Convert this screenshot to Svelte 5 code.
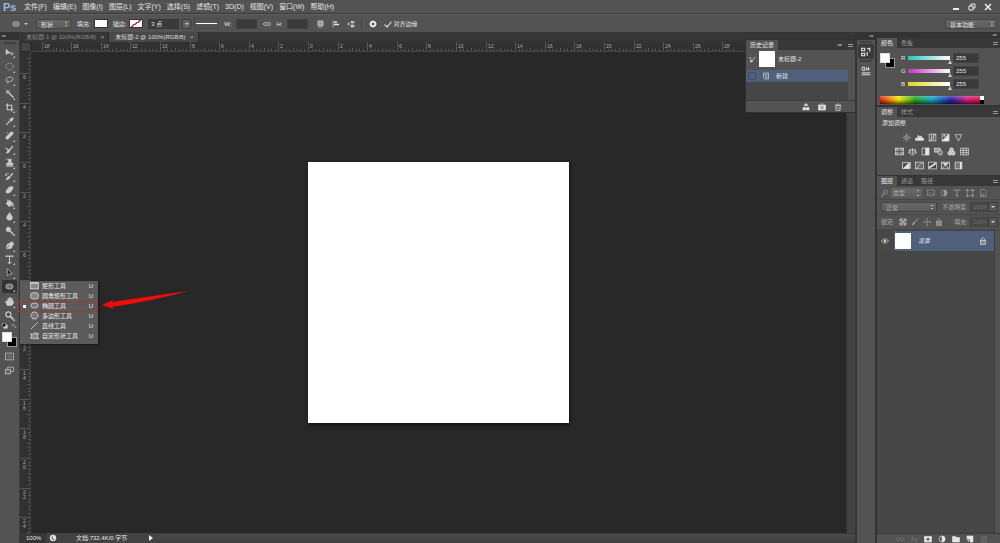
<script>
  const menus = ['文件(F)', '编辑(E)', '图像(I)', '图层(L)', '文字(Y)', '选择(S)', '滤镜(T)', '3D(D)', '视图(V)', '窗口(W)', '帮助(H)'];

  // 16x16 stroke icons
  const icons = {
    move: '<path d="M2 2v10l3-3h4z" fill="currentColor"/><path d="M12 6v8M8 10h8"/>',
    marquee: '<ellipse cx="8" cy="8" rx="6.500" ry="6" stroke-dasharray="3 2"/>',
    lasso: '<ellipse cx="8" cy="6" rx="6.500" ry="4" transform="rotate(-15 8 6)"/><path d="M3 8c-1 3 3 2 2 6" />',
    wand: '<path d="M7 7l8 8" stroke-width="2.400"/><path d="M5 1v8M1 5h8M2 2l6 6M8 2l-6 6"/>',
    crop: '<path d="M4 1v11h11M1 4h11v11" stroke-width="2"/>',
    dropper: '<path d="M2 14l7-7" stroke-width="2"/><path d="M8 5l3 3 4-5-2-2z" fill="currentColor"/>',
    heal: '<path d="M4 12l8-8" stroke-width="6" stroke-linecap="round"/><path d="M2 5c1-3 3-3 5-3" stroke-dasharray="2 1"/>',
    brush: '<path d="M8 9l6-7" stroke-width="2.400"/><path d="M1 5l5 3c4 1 3 5-1 6H2c3-2 2-4 3-5z" fill="currentColor"/>',
    stamp: '<path d="M6 2h5v3l-1 4h4v4H3V9h4L6 5z" fill="currentColor"/><path d="M2 15h13M1 2h4"/>',
    history: '<path d="M8 9l6-7" stroke-width="2.400"/><path d="M7 8c3 2 1 5-5 6 2-3 1-5 5-6z" fill="currentColor"/><path d="M1 6c1-4 4-4 6-3M1 3v3h3"/>',
    eraser: '<path d="M2 10l6-7h6v4l-6 7H2z" fill="currentColor"/>',
    bucket: '<path d="M2 8l6-6 6 6-6 6z" fill="currentColor"/><path d="M5 1v6M14 8v6" stroke-width="2"/>',
    blur: '<path d="M8 1c3 5 5 6 5 9 0 6-10 6-10 0 0-3 2-4 5-9z" fill="currentColor"/>',
    dodge: '<circle cx="6" cy="6" r="4" fill="currentColor"/><path d="M9 9l6 6" stroke-width="2.400"/>',
    pen: '<path d="M2 14l2-8 6-3 4 4-3 6zM10 3l2-2 4 4-2 2" fill="currentColor"/><path d="M2 14l6-6" stroke="#444"/>',
    type: '<path d="M2 4V2h12v2M8 2v12M5 14h6" stroke-width="1.800"/>',
    select: '<path d="M4 1v13l3.500-3.500H13z" fill="#222"/>',
    ellipse: '<ellipse cx="8" cy="8" rx="6.500" ry="4.500" fill="#777"/>',
    hand: '<path d="M4 15L1 8l2-1 2 2V3h2v4l1-6h2v6l2-5 1 1v5l2-1v4l-3 4z" fill="currentColor"/>',
    zoom: '<circle cx="6" cy="6" r="4.500" stroke-width="2"/><path d="M9 9l6 6" stroke-width="3"/>',
    mask: '<rect x="1" y="2" width="14" height="12"/><circle cx="8" cy="8" r="3" stroke-dasharray="2 1"/>',
    screen: '<rect x="5" y="2" width="10" height="8"/><rect x="1" y="6" width="9" height="8" fill="#666"/>',
    rect: '<rect x="1" y="3" width="14" height="11" fill="#888"/><path d="M1 4h14"/>',
    rounded: '<rect x="1" y="3" width="14" height="11" rx="4" fill="#888"/>',
    polygon: '<path d="M5 2h6l4 6-4 6H5L1 8z" fill="#777"/>',
    line: '<path d="M2 14L14 2"/>',
    custom: '<path d="M1 13l2-4-2-4 5 1 3-4 1 3 5-1-2 5 2 5-5-1-2 2-2-2z" fill="#888"/>',
    link: '<path d="M7 5H4a3 3 0 000 6h3M9 5h3a3 3 0 010 6H9M5 8h6"/>',
    combine: '<rect x="2" y="2" width="10" height="9" fill="#999"/><path d="M2 14h9"/>',
    align: '<path d="M2 1v14"/><path d="M4 4h6M4 9h10" stroke-width="3"/>',
    arrange: '<path d="M1 8h5M3 5v6"/><path d="M8 3h6v3H8zM8 10h6v4H8z" fill="#aaa"/>',
    gear: '<circle cx="8" cy="8" r="4.500" stroke-width="4"/><path d="M8 0v4M8 12v4M0 8h4M12 8h4" />',
    snapshot: '<rect x="1" y="4" width="14" height="10" fill="currentColor"/><circle cx="8" cy="9" r="2.500" stroke="#444"/><path d="M5 2h6"/>',
    trash: '<path d="M3 5h10l-1 10H4zM2 4h12M6 2h4M6 7v6M10 7v6"/>',
    newdoc: '<path d="M8 1l4 4H4zM2 9h5v5H2zM9 9h5v5H9z" fill="currentColor"/>',
    page: '<path d="M3 2h10v12H6l-3-3zM5 5h6M5 8h6M7 11h4"/>',
    sun: '<circle cx="8" cy="8" r="3"/><path d="M8 1v2M8 13v2M1 8h2M13 8h2M3 3l1 1M12 12l1 1M13 3l-1 1M3 13l1-1"/>',
    levels: '<path d="M1 13V9l3 1 2-6 3 4 2-3 2 5 2-1v4z" fill="currentColor"/>',
    curves: '<rect x="2" y="2" width="12" height="12"/><path d="M2 14C9 13 7 4 14 2M6 2v12M10 2v12"/>',
    exposure: '<rect x="2" y="2" width="12" height="12"/><path d="M2 14L14 2v12z" fill="currentColor"/><path d="M4 5h4M6 3v4"/>',
    vibrance: '<path d="M2 3h12L8 14z"/>',
    hue: '<rect x="1" y="2" width="14" height="12" fill="#999"/><path d="M1 8h14M8 2v12" stroke="#444"/>',
    balance: '<path d="M8 2v11M2 5h12M3 5l-2 6h4zM13 5l-2 6h4zM5 14h6"/>',
    bw: '<rect x="2" y="2" width="12" height="12"/><path d="M8 2h6v12H8z" fill="currentColor"/>',
    photo: '<rect x="1" y="2" width="10" height="7" fill="#999"/><circle cx="11" cy="10" r="4" fill="#777"/>',
    mixer: '<circle cx="8" cy="5" r="3.500" fill="#bbb"/><circle cx="5" cy="11" r="3.500" fill="#bbb"/><circle cx="11" cy="11" r="3.500" fill="#bbb"/>',
    grid: '<path d="M1 2h14v12H1zM1 6h14M1 10h14M6 2v12M11 2v12"/>',
    invert: '<rect x="1" y="3" width="14" height="10"/><path d="M3 13L13 3v10z" fill="currentColor"/>',
    poster: '<rect x="1" y="2" width="14" height="12" fill="#666"/><path d="M2 13c6-1 3-7 12-10"/>',
    threshold: '<rect x="1" y="2" width="14" height="12" fill="#444"/><path d="M2 12L14 4" stroke-width="3"/>',
    selective: '<rect x="1" y="2" width="14" height="12"/><path d="M1 2l14 12M15 2L1 14M4 4h8l-4 4z" fill="currentColor"/>',
    gradient: '<rect x="2" y="2" width="12" height="12" fill="#777"/><path d="M12 2v12" stroke-width="3"/>',
    search: '<circle cx="9" cy="6" r="4"/><path d="M6 9l-5 6" stroke-width="2"/>',
    image: '<rect x="1" y="2" width="14" height="11"/><path d="M2 12l4-5 3 3 2-2 3 4"/>',
    half: '<circle cx="8" cy="8" r="6"/><path d="M8 2a6 6 0 010 12z" fill="currentColor"/>',
    shape: '<rect x="3" y="3" width="10" height="10"/><path d="M1 1h3v3H1zM12 1h3v3h-3zM1 12h3v3H1zM12 12h3v3h-3z" fill="currentColor"/>',
    smart: '<path d="M3 1h9l2 3v11H3zM5 10h5v4H5z"/>',
    lock: '<rect x="3" y="7" width="10" height="8" fill="#888"/><path d="M5 7V4c0-3 6-3 6 0v3"/>',
    pixels: '<rect x="2" y="2" width="12" height="12"/><path d="M2 2h4v4H2zM10 2h4v4h-4zM6 6h4v4H6zM2 10h4v4H2zM10 10h4v4h-4z" fill="currentColor"/>',
    paint: '<path d="M6 10l8-9" stroke-width="1.800"/><path d="M5 9l2 2-5 3z" fill="currentColor"/>',
    pos: '<path d="M8 1v14M1 8h14M6 3l2-2 2 2M6 13l2 2 2-2M3 6L1 8l2 2M13 6l2 2-2 2"/>',
    eye: '<path d="M1 8c4-6 10-6 14 0-4 6-10 6-14 0z"/><circle cx="8" cy="8" r="2" fill="currentColor"/>',
    fx: '<path d="M7 2C4 2 5 14 2 14M3 7h5M9 7l5 7M14 7l-5 7"/>',
    addmask: '<rect x="1" y="3" width="14" height="11" fill="currentColor"/><circle cx="8" cy="8.500" r="3" fill="#333"/>',
    folder: '<path d="M1 3h6l1 2h7v9H1z" fill="currentColor"/>',
    newlayer: '<path d="M2 2h12v12H7l-5-5z" fill="currentColor"/><path d="M2 9h5v5" stroke="#444"/>',
    historyPanel: '<path d="M1 2h5v4H1zM1 10h5v4H1zM10 14V8M10 3l4-1v5" stroke-width="1.800"/>',
    props: '<path d="M2 2h4v5H2zM9 2v5M9 5h5M12 2v5M1 11h14M1 14h14" stroke-width="1.500"/>',
    source: '<path d="M2 2v4h4M14 2l-8 11" stroke-width="1.500"/><path d="M3 14l1-5 4 3z" fill="currentColor"/>',
    swap: '<path d="M3 6c5-4 8 0 9 6M6 2L2 6l4 3M9 10l3 3 3-3"/>',
    defaults: '<rect x="5" y="5" width="9" height="9" fill="#ddd"/><rect x="1" y="1" width="9" height="9" fill="#111"/>',
    globe: '<circle cx="8" cy="8" r="6" fill="currentColor"/><path d="M8 5a3 3 0 103 5" stroke="#555" stroke-width="2"/>'
  };

  const toolGroups = [
    { size: 'one', tools: ['move'] },
    { size: 'five', tools: ['marquee', 'lasso', 'wand', 'crop', 'dropper'] },
    { size: 'eight', tools: ['heal', 'brush', 'stamp', 'history', 'eraser', 'bucket', 'blur', 'dodge'] },
    { size: 'four', tools: ['pen', 'type', 'select', 'ellipse'] },
    { size: 'two', tools: ['hand', 'zoom'] }
  ];

  const shapes = [
    ['rect', '矩形工具'],
    ['rounded', '圆角矩形工具'],
    ['ellipse', '椭圆工具'],
    ['polygon', '多边形工具'],
    ['line', '直线工具'],
    ['custom', '自定形状工具']
  ];

  const adjustments = [
    ['sun', 'levels', 'curves', 'exposure', 'vibrance'],
    ['hue', 'balance', 'bw', 'photo', 'mixer', 'grid'],
    ['invert', 'poster', 'threshold', 'selective', 'gradient']
  ];

  const docSize = 261;
  const unit = 14.8; // one ruler unit on screen
  const historyWidth = 110;
  let areaWidth = $state(816);
  let areaHeight = $state(481);

  function ticks(length) {
    const origin = (length - docSize) / 2;
    const out = [];
    for (let n = Math.ceil(-origin / unit); origin + n * unit < length; n++) {
      out.push({ n, at: Math.round(origin + n * unit) });
    }
    return out;
  }
  // nothing to draw under the history panel
  let xTicks = $derived(ticks(areaWidth).filter((t) => t.at < areaWidth - historyWidth));
  let yTicks = $derived(ticks(areaHeight));
</script>

{#snippet icon(name)}
  <svg class="icon" viewBox="0 0 16 16" aria-hidden="true">{@html icons[name]}</svg>
{/snippet}

<div class="app">
  <header class="menubar">
    <span class="logo">Ps</span>
    <nav>
      {#each menus as item}<button>{item}</button>{/each}
    </nav>
    <div class="window-buttons">
      <button aria-label="最小化"><svg viewBox="0 0 8 8"><path d="M1 6h6" stroke-width="2" /></svg></button>
      <button aria-label="还原"><svg viewBox="0 0 8 8"><path d="M3 3V1h4v4H5M1 3h4v4H1z" /></svg></button>
      <button aria-label="关闭"><svg viewBox="0 0 8 8"><path d="M1 1l6 6M7 1L1 7" stroke-width="1.500" /></svg></button>
    </div>
  </header>

  <div class="options">
    <button class="preset" aria-label="工具预设">{@render icon('ellipse')}<i class="down"></i></button>
    <select class="mode" aria-label="模式"><option>形状</option></select>
    <span>填充:</span>
    <button class="swatch" aria-label="填充"></button>
    <span>描边:</span>
    <button class="swatch none" aria-label="描边"></button>
    <input class="stroke-width" aria-label="描边宽度" value="3 点" />
    <button class="drop" aria-label="宽度列表"><i class="down"></i></button>
    <button class="dash" aria-label="描边类型"><i></i></button>
    <label>W:<input class="dim" /></label>
    <span class="linked">{@render icon('link')}</span>
    <label>H:<input class="dim" /></label>
    <div class="path-ops">
      <button aria-label="路径操作">{@render icon('combine')}</button>
      <button aria-label="对齐">{@render icon('align')}</button>
      <button aria-label="排列">{@render icon('arrange')}</button>
    </div>
    <button class="gear" aria-label="设置">{@render icon('gear')}</button>
    <label class="edges"><input type="checkbox" checked />对齐边缘</label>
    <select class="workspace" aria-label="工作区"><option>基本功能</option></select>
  </div>

  <main>
    <aside class="toolbar">
      <div class="strip">▸▸</div>
      <div class="grip"></div>
      {#each toolGroups as group}
        <div class="group {group.size}">
          {#each group.tools as tool}
            <div class="tool" class:active={tool === 'ellipse'}>
              <button aria-label={tool}>{@render icon(tool)}</button>
              {#if tool === 'ellipse'}
                <div class="flyout">
                  {#each shapes as [name, label]}
                    <button class:current={name === 'ellipse'}>
                      {@render icon(name)}<span>{label}</span><kbd>U</kbd>
                    </button>
                  {/each}
                  <svg class="pointer" viewBox="0 0 86 18" aria-hidden="true">
                    <path d="M0 14L11 9L10 11Q50 5 86 0Q55 9 10 16L12 18Z" />
                  </svg>
                </div>
              {/if}
            </div>
          {/each}
        </div>
      {/each}
      <div class="mini">{@render icon('defaults')}{@render icon('swap')}</div>
      <div class="colors"><i class="back"></i><i class="front"></i></div>
      <button class="wide" aria-label="快速蒙版">{@render icon('mask')}</button>
      <button class="wide" aria-label="屏幕模式">{@render icon('screen')}</button>
    </aside>

    <section class="workarea">
      <div class="doc-tabs">
        <button>未标题-1 @ 100%(RGB/8) <b>×</b></button>
        <button class="active">未标题-2 @ 100%(RGB/8) <b>×</b></button>
      </div>
      <div class="view">
        <div class="corner"></div>
        <div class="ruler-x">
          <svg width="100%" height="100%">
            {#each xTicks as t}
              <path d="M{t.at + 0.5} {t.n % 2 ? 6 : 0}V10M{t.at + 4.5} 7v3M{t.at + 7.5} 7v3M{t.at + 11.5} 7v3" />
              {#if t.n % 2 === 0}<text x={t.at + 2} y="6">{Math.abs(t.n)}</text>{/if}
            {/each}
          </svg>
        </div>
        <div class="ruler-y">
          <svg width="100%" height="100%">
            {#each yTicks as t}
              <path d="M{t.n % 2 ? 7 : 0} {t.at + 0.5}H11M8 {t.at + 4.5}h3M8 {t.at + 7.5}h3M8 {t.at + 11.5}h3" />
              {#if t.n % 2 === 0}
                {#each String(Math.abs(t.n)) as digit, i}
                  <text x="3" y={t.at + 6 + i * 5}>{digit}</text>
                {/each}
              {/if}
            {/each}
          </svg>
        </div>
        <div class="canvas" bind:clientWidth={areaWidth} bind:clientHeight={areaHeight}>
          <div class="document"></div>
        </div>
        <div class="scroll-y"></div>
      </div>
      <footer class="status">
        <span class="percent">100%</span>
        <span class="globe">{@render icon('globe')}</span>
        <span class="size">文档:732.4K/0 字节</span>
        <button aria-label="状态信息"><i class="right"></i></button>
        <div class="scroll-x"></div>
      </footer>

      <div class="history">
        <div class="tabs"><button class="active">历史记录</button><span>▸▸</span><i class="panel-menu"></i></div>
        <div class="history-list">
          <div class="snap">{@render icon('source')}<i class="thumb"></i>未标题-2</div>
          <div class="state"><i class="box"></i>{@render icon('page')}<span>新建</span></div>
        </div>
        <div class="history-foot">
          <button aria-label="从当前状态创建新文档">{@render icon('newdoc')}</button>
          <button aria-label="创建新快照">{@render icon('snapshot')}</button>
          <button aria-label="删除">{@render icon('trash')}</button>
        </div>
      </div>
    </section>

    <aside class="dock">
      <div class="strip">◂◂</div>
      <div class="grip"></div>
      <button class="active" aria-label="历史记录">{@render icon('historyPanel')}</button>
      <div class="grip"></div>
      <button aria-label="属性">{@render icon('props')}</button>
    </aside>

    <aside class="panels">
      <div class="strip">▸▸</div>
      <section class="color">
        <div class="tabs"><button class="active">颜色</button><button>色板</button><i class="panel-menu"></i></div>
        <div class="color-body">
          <div class="colors"><i class="back"></i><i class="front"></i></div>
          <div class="channels">
            {#each ['R', 'G', 'B'] as ch}
              <label for="ch-{ch}">{ch}</label>
              <div class="track {ch}"></div>
              <input id="ch-{ch}" value="255" />
            {/each}
          </div>
        </div>
        <div class="spectrum"><i></i></div>
      </section>

      <section class="adjust">
        <div class="tabs"><button class="active">调整</button><button>样式</button><i class="panel-menu"></i></div>
        <p>添加调整</p>
        {#each adjustments as row}
          <div class="adjust-row">
            {#each row as name}<button aria-label={name}>{@render icon(name)}</button>{/each}
          </div>
        {/each}
      </section>

      <section class="layers">
        <div class="tabs"><button class="active">图层</button><button>通道</button><button>路径</button><i class="panel-menu"></i></div>
        <div class="row filter">
          <span class="kind">{@render icon('search')}<select aria-label="类型"><option>类型</option></select></span>
          {#each ['image', 'half', 'type', 'shape', 'smart'] as name}
            <button aria-label={name}>{@render icon(name)}</button>
          {/each}
        </div>
        <div class="row blend">
          <select aria-label="混合模式"><option>正常</option></select>
          <label for="opacity">不透明度:</label>
          <input id="opacity" value="100%" disabled />
          <button class="drop" aria-label="不透明度"><i class="down"></i></button>
        </div>
        <div class="row locks">
          <span>锁定:</span>
          {#each ['pixels', 'paint', 'pos', 'lock'] as name}
            <button aria-label={name}>{@render icon(name)}</button>
          {/each}
          <label for="fill">填充:</label>
          <input id="fill" value="100%" disabled />
          <button class="drop" aria-label="填充"><i class="down"></i></button>
        </div>
        <div class="layer-list">
          <div class="layer">
            <button class="eye" aria-label="可见性">{@render icon('eye')}</button>
            <div class="layer-main"><i class="thumb"></i><em>背景</em>{@render icon('lock')}</div>
          </div>
        </div>
        <div class="layer-foot">
          {#each ['link', 'fx', 'addmask', 'half', 'folder', 'newlayer', 'trash'] as name}
            <button class:off={name === 'link' || name === 'fx' || name === 'trash'} aria-label={name}>{@render icon(name)}</button>
          {/each}
        </div>
      </section>
    </aside>
  </main>
</div>

<style>
  :global(body) {
    background: #282828;
    overflow: hidden;
  }
  .app {
    display: flex;
    flex-direction: column;
    height: 100vh;
    color: #e6e6e6;
    font: 6px/10px 'Liberation Sans', 'Noto Sans CJK SC', sans-serif;
    background: #535353;
  }
  .app * { box-sizing: border-box; }
  button, input, select {
    appearance: none;
    margin: 0;
    padding: 0;
    border: 0;
    border-radius: 0;
    background: none;
    color: inherit;
    font: inherit;
    min-width: 0;
  }
  i { display: block; }
  .icon {
    display: block;
    width: 8px;
    height: 8px;
    fill: none;
    stroke: currentColor;
    stroke-width: 1.2;
    flex: none;
  }
  .down {
    border: 2px solid transparent;
    border-top: 2px solid #ccc;
    border-bottom: 0;
  }
  .right {
    border: 3px solid transparent;
    border-left: 4px solid #eee;
    border-right: 0;
  }

  .menubar {
    display: flex;
    align-items: center;
    height: 14px;
    border-bottom: 1px solid #3c3c3c;
    flex: none;
  }
  .logo {
    width: 24px;
    padding-left: 3px;
    color: #8fbbe4;
    font-size: 11px;
    font-weight: bold;
  }
  nav { display: flex; gap: 6px; font-size: 7px; }
  .window-buttons {
    display: flex;
    gap: 8px;
    margin-left: auto;
    padding-right: 8px;
  }
  .window-buttons svg {
    display: block;
    width: 8px;
    height: 8px;
    fill: none;
    stroke: #eee;
  }

  .options {
    display: flex;
    align-items: center;
    gap: 3px;
    height: 18px;
    padding: 0 3px 0 12px;
    border-top: 1px solid #606060;
    flex: none;
  }
  .preset { display: flex; align-items: center; gap: 4px; width: 21px; }
  select {
    height: 10px;
    padding: 0 4px;
    border: 1px solid #454545;
  }
  .mode { width: 35px; margin-right: 3px; }
  .swatch {
    width: 14px;
    height: 9px;
    background: #fff;
    border: 1px solid #333;
    margin-right: 2px;
  }
  .swatch.none { background: linear-gradient(145deg, #fff 45%, #b33 45%, #b33 55%, #fff 55%); }
  .stroke-width { width: 31px; height: 10px; padding-left: 3px; background: #3a3a3a; }
  .drop {
    display: grid;
    place-items: center;
    width: 9px;
    height: 10px;
    background: #626262;
    border: 1px solid #3d3d3d;
  }
  .dash { width: 25px; padding: 4px 1px; border: 1px solid #494949; margin-right: 2px; }
  .dash i { height: 1px; background: #fff; }
  label { display: flex; align-items: center; gap: 4px; }
  .dim { width: 21px; height: 10px; background: #3a3a3a; border: 1px solid #424242; }
  .linked { padding: 0 3px; }
  .path-ops {
    display: flex;
    gap: 7px;
    padding: 0 6px;
    border-right: 1px solid #444;
  }
  .gear { padding: 0 4px; }
  .edges input { width: 6px; height: 6px; position: relative; }
  .edges input::after {
    content: '';
    position: absolute;
    left: 2px;
    top: -1px;
    width: 3px;
    height: 6px;
    border: solid #eee;
    border-width: 0 1px 1px 0;
    transform: rotate(40deg);
  }
  .workspace { width: 52px; margin-left: auto; }
  .mode, .workspace, .kind select, .blend select {
    background-image: linear-gradient(#bbb, #bbb), linear-gradient(#bbb, #bbb), linear-gradient(#686868, #5c5c5c);
    background-size: 2px 1px, 2px 1px, auto;
    background-position: right 3px top 2px, right 3px bottom 2px, 0 0;
    background-repeat: no-repeat;
  }

  main { display: flex; flex: 1; min-height: 0; }
  .strip {
    height: 8px;
    padding-left: 2px;
    background: #333;
    color: #bbb;
    font-size: 4px;
    line-height: 8px;
    flex: none;
  }
  .grip {
    align-self: center;
    width: 12px;
    height: 2px;
    margin: 1px 0;
    background: #404040;
    flex: none;
  }

  .toolbar {
    position: relative;
    z-index: 2;
    display: flex;
    flex-direction: column;
    gap: 1px;
    width: 20px;
    flex: none;
    border-right: 1px solid #3b3b3b;
    color: #ccc;
  }
  .toolbar .icon { width: 9px; height: 9px; }
  .group { display: grid; grid-auto-rows: 1fr; flex: none; }
  .one { height: 13px; }
  .two { height: 27px; margin-top: 1px; }
  .four { height: 54px; margin-top: 1px; }
  .five { height: 68px; }
  .eight { height: 108px; }
  .tool { position: relative; display: grid; }
  .tool > button { display: grid; place-items: center; }
  .tool::after {
    content: '';
    position: absolute;
    right: 4px;
    bottom: 1px;
    border: 1px solid;
    border-color: transparent #ccc #ccc transparent;
  }
  .tool.active > button {
    margin: 0 2px;
    background: #333;
    border-radius: 2px;
  }
  .flyout {
    position: absolute;
    top: 1px;
    left: 20px;
    width: 78px;
    padding-bottom: 3px;
    background: #5b5b5b;
    box-shadow: 1px 1px 2px #181818;
    color: #eee;
  }
  .flyout button {
    position: relative;
    display: flex;
    align-items: center;
    gap: 3px;
    width: 100%;
    height: 10px;
    padding: 0 5px 0 10px;
    text-align: left;
  }
  .flyout kbd { margin-left: auto; font: inherit; }
  .flyout .current::before {
    content: '';
    position: absolute;
    inset: 0 0 -1px -3px;
    border: 1px solid #9a3b36;
  }
  .flyout .current::after {
    content: '';
    position: absolute;
    left: 3px;
    top: 4px;
    width: 3px;
    height: 3px;
    background: #fff;
  }
  .pointer {
    position: absolute;
    left: 82px;
    top: 10px;
    width: 86px;
    height: 18px;
    fill: #f00c0c;
  }
  .toolbar .mini { display: flex; gap: 3px; padding: 0 2px; }
  .toolbar .mini .icon { width: 6px; height: 6px; }
  .colors { display: grid; width: 15px; height: 15px; flex: none; }
  .colors i { grid-area: 1 / 1; width: 10px; height: 10px; }
  .front { background: #fff; border: 1px solid #ddd; }
  .back { background: #000; border: 1px solid #999; place-self: end; }
  .toolbar .colors { margin: 2px; }
  .wide { display: grid; place-items: center; height: 13px; flex: none; }

  .workarea {
    position: relative;
    display: flex;
    flex-direction: column;
    flex: 1;
    min-width: 0;
    background: #333;
  }
  .doc-tabs { display: flex; height: 10px; background: #363636; flex: none; }
  .doc-tabs button {
    padding: 0 4px 0 6px;
    border-right: 1px solid #282828;
    color: #8c8c8c;
    white-space: nowrap;
  }
  .doc-tabs b { margin-left: 3px; font-weight: normal; color: #aaa; }
  .doc-tabs .active { background: #494949; color: #ddd; }
  .view {
    display: grid;
    grid-template: 10px 1fr / 11px 1fr 9px;
    flex: 1;
    min-height: 0;
  }
  .corner { background: #444; border: 1px solid #2a2a2a; }
  .ruler-x { grid-column: 2 / 4; border-bottom: 1px solid #444; }
  .ruler-y { border-right: 1px solid #444; min-height: 0; }
  .ruler-x, .ruler-y { background: #313131; overflow: hidden; }
  .view svg { display: block; }
  .view path { stroke: #555; }
  .view text { fill: #aaa; font-size: 5px; }
  .canvas {
    display: grid;
    place-items: center;
    min-height: 0;
    background: #282828;
  }
  .document {
    width: 261px;
    height: 261px;
    background: #fff;
    box-shadow: 1px 2px 3px #111;
  }
  .scroll-y { background: #424242; border-left: 1px solid #333; border-right: 1px solid #4a4a4a; }
  .status {
    display: flex;
    align-items: center;
    height: 10px;
    background: #424242;
    flex: none;
  }
  .percent { width: 26px; padding-left: 6px; background: #363636; }
  .globe { width: 30px; padding-left: 3px; }
  .status .size { width: 73px; white-space: nowrap; }
  .status button { width: 8px; }
  .scroll-x {
    flex: 1;
    height: 10px;
    background: linear-gradient(#4c4c4c, #3c3c3c);
    border-top: 1px solid #383838;
  }

  /* floating panel above the canvas */
  .history {
    position: absolute;
    top: 7px;
    right: 0;
    width: 110px;
    background: #535353;
    border: 1px solid #303030;
    border-right: 0;
  }
  .tabs {
    display: flex;
    align-items: center;
    height: 10px;
    background: #383838;
    color: #999;
  }
  .tabs button { height: 10px; padding: 0 4px; }
  .tabs .active { background: #535353; color: #e6e6e6; }
  .tabs span { margin-left: auto; margin-right: 6px; font-size: 4px; color: #ccc; }
  .panel-menu {
    width: 5px;
    height: 3px;
    margin: 0 2px 0 auto;
    border: solid #999;
    border-width: 1px 0;
  }
  .tabs span + .panel-menu { margin-left: 0; }
  .history-list { height: 50px; margin-right: 7px; background: #464646; }
  .snap {
    display: flex;
    align-items: center;
    gap: 3px;
    height: 20px;
    padding: 0 0 2px 3px;
    background: #535353;
  }
  .snap .icon { width: 7px; height: 7px; }
  .thumb { width: 16px; height: 16px; background: #fff; flex: none; }
  .state {
    display: flex;
    align-items: center;
    height: 12px;
    gap: 6px;
    padding-left: 2px;
    background: #505f7c;
  }
  .box { width: 8px; height: 8px; border: 1px solid #43506b; }
  .history-foot {
    display: flex;
    justify-content: flex-end;
    align-items: center;
    gap: 8px;
    height: 12px;
    padding-right: 13px;
    border-top: 1px solid #3c3c3c;
  }

  .dock {
    display: flex;
    flex-direction: column;
    align-items: center;
    width: 22px;
    flex: none;
    border: solid #333;
    border-width: 0 2px;
  }
  .dock .strip { width: 100%; text-align: right; padding-right: 2px; }
  .dock button { display: grid; place-items: center; width: 16px; height: 15px; }
  .dock .icon { width: 10px; height: 10px; }
  .dock .active { background: #3a3a3a; border-radius: 2px; }

  .panels {
    display: flex;
    flex-direction: column;
    width: 123px;
    flex: none;
  }
  .panels .strip { height: 6px; padding-right: 3px; line-height: 6px; text-align: right; }
  .color { height: 69px; border-bottom: 2px solid #333; flex: none; }
  .color-body { display: flex; gap: 6px; padding: 5px 0 0 3px; }
  .channels {
    display: grid;
    grid-template-columns: 7px 42px 29px;
    align-items: center;
    row-gap: 3px;
  }
  .channels input {
    height: 10px;
    margin-left: 3px;
    padding-left: 2px;
    background: #3a3a3a;
    border: 1px solid #424242;
  }
  .track { position: relative; height: 4px; }
  .track::after {
    content: '';
    position: absolute;
    right: -2px;
    top: 4px;
    border: 2px solid transparent;
    border-top: 0;
    border-bottom: 4px solid #ccc;
  }
  .R { background: linear-gradient(90deg, #28c4c4, #fff); }
  .G { background: linear-gradient(90deg, #c434c4, #fff); }
  .B { background: linear-gradient(90deg, #e0d820, #fff); }
  .spectrum {
    display: flex;
    justify-content: flex-end;
    width: 104px;
    height: 8px;
    margin: 7px 3px 0;
    background:
      linear-gradient(rgba(255, 255, 255, 0.3), transparent 50%, rgba(0, 0, 0, 0.6)),
      linear-gradient(90deg, #e01818, #f0e000 18%, #20a020 34%, #10a0c0 50%, #2020a0 68%, #d01880 84%, #e01020);
  }
  .spectrum i { width: 4px; background: linear-gradient(#fff 50%, #000 50%); }
  .adjust { height: 69px; border-bottom: 1px solid #333; flex: none; }
  .adjust p { margin: 1px 0 2px 5px; }
  .adjust-row { display: flex; justify-content: center; gap: 4px; height: 14px; padding-right: 13px; align-items: center; }
  .adjust-row .icon { width: 9px; height: 9px; }

  .layers { display: flex; flex-direction: column; flex: 1; min-height: 0; }
  .row {
    display: flex;
    align-items: center;
    height: 15px;
    padding: 0 2px 0 4px;
    border-bottom: 1px solid #484848;
    color: #aaa;
    flex: none;
  }
  .filter { gap: 5px; height: 14px; color: #999; }
  .kind { display: flex; align-items: center; gap: 2px; width: 41px; color: #aaa; }
  .kind select { width: 24px; padding: 0 2px; border: 0; flex: 1; }
  .blend select { width: 56px; margin-right: 5px; }
  .row label { margin-left: auto; }
  .row input { width: 18px; height: 10px; margin-left: 2px; padding-left: 2px; background: #484848; color: #707070; border: 1px solid #444; }
  .row .drop { background: #555; width: 10px; }
  .locks { gap: 4px; }
  .locks .icon { width: 8px; height: 8px; }
  .locks input { margin: 0 -4px 0 -2px; }
  .layer-list {
    flex: 1;
    margin-right: 5px;
    padding-top: 1px;
    background: #464646;
    border-right: 1px solid #3d3d3d;
  }
  .layer { display: flex; height: 20px; background: #505f7c; }
  .eye { width: 17px; padding-left: 4px; background: #484848; }
  .layer-main { display: flex; align-items: center; gap: 7px; flex: 1; padding: 0 7px 0 1px; }
  .layer-main em { flex: 1; }
  .layer-foot {
    display: flex;
    justify-content: center;
    align-items: center;
    gap: 6px;
    height: 10px;
    padding-left: 6px;
    border-top: 1px solid #3a3a3a;
    flex: none;
  }
  .layer-foot .off { color: #777; }
</style>
